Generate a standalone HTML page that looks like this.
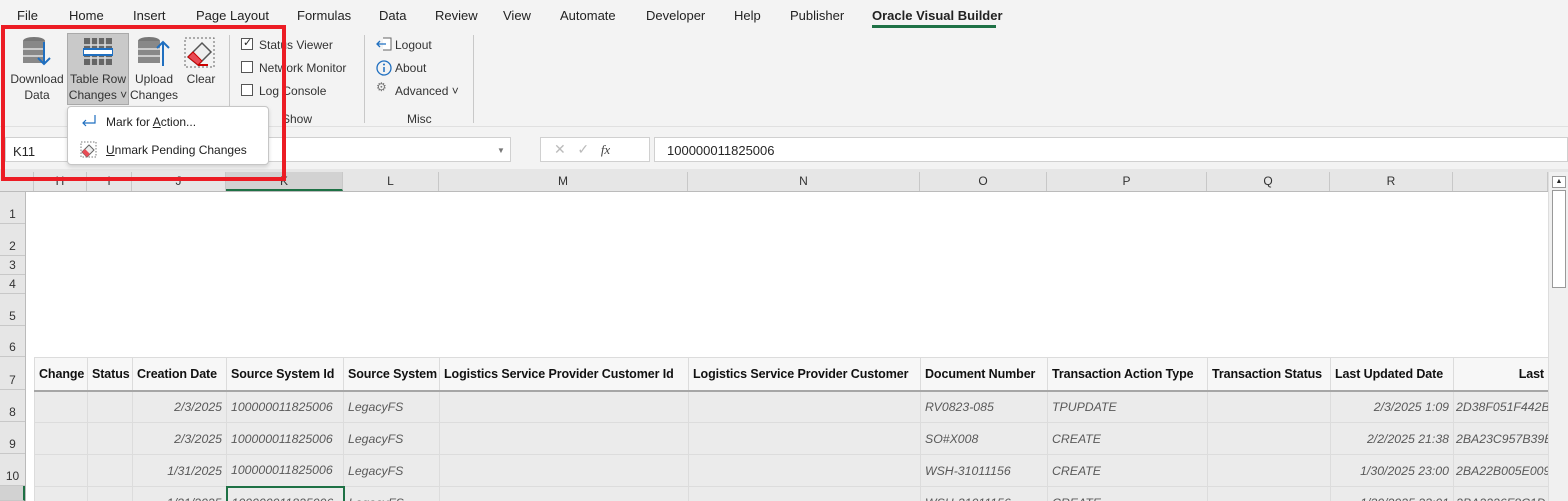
<!DOCTYPE html>
<html style="overflow:hidden;height:501px"><head><meta charset="utf-8"><style>
*{box-sizing:border-box;margin:0;padding:0}
body{width:1568px;height:501px;overflow:hidden;background:#f3f3f3;font-family:"Liberation Sans",sans-serif;position:relative;color:#262626}
.a{position:absolute}
.tab{position:absolute;top:8px;font-size:13px;color:#222}
.lbl{font-size:12px;color:#333;text-align:center;line-height:16px}
.sm{font-size:12px;color:#333}
.cb{position:absolute;width:12px;height:12px;border:1px solid #555;background:#fff}
table{border-collapse:collapse;table-layout:fixed;position:absolute;left:34px;top:357px;width:1514px}
td{height:32px;font-size:12.3px;padding:0 4px;white-space:nowrap;overflow:hidden;border:1px solid #dcdcdc;background:#ebebeb;color:#595959;font-style:italic;vertical-align:middle}
tr.h td{background:#f7f7f7;font-weight:bold;font-style:normal;color:#111;height:33px;border-bottom:2px solid #a6a6a6;font-size:12.5px;letter-spacing:-0.1px;padding:0 4px}
.r{text-align:right}
.ch{position:absolute;top:172px;height:19px;font-size:12px;text-align:center;line-height:19px;color:#333;border-right:1px solid #c8c8c8;background:#e6e6e6}
.rh{position:absolute;left:0;width:25px;font-size:12px;text-align:center;color:#333;border-bottom:1px solid #c8c8c8;background:#e6e6e6;display:flex;align-items:flex-end;justify-content:center;padding-bottom:2px}
</style></head><body>
<div class="tab" style="left:17px">File</div>
<div class="tab" style="left:69px">Home</div>
<div class="tab" style="left:133px">Insert</div>
<div class="tab" style="left:196px">Page Layout</div>
<div class="tab" style="left:297px">Formulas</div>
<div class="tab" style="left:379px">Data</div>
<div class="tab" style="left:435px">Review</div>
<div class="tab" style="left:503px">View</div>
<div class="tab" style="left:560px">Automate</div>
<div class="tab" style="left:646px">Developer</div>
<div class="tab" style="left:734px">Help</div>
<div class="tab" style="left:790px">Publisher</div>
<div class="tab" style="left:872px;font-weight:bold;color:#222">Oracle Visual Builder</div>
<div class="a" style="left:872px;top:25px;width:124px;height:3px;background:#1e7145"></div>
<div class="a" style="left:0;top:30px;width:1568px;height:97px;background:#f3f3f3;border-bottom:1px solid #e0e0e0"></div>

<svg class="a" style="left:20px;top:36px" width="34" height="32"><ellipse cx="14" cy="5" rx="11" ry="4" fill="#777"/><rect x="3" y="5" width="22" height="22" fill="#888"/><rect x="3" y="12" width="22" height="2" fill="#ccc"/><rect x="3" y="19" width="22" height="2" fill="#ccc"/><path d="M24 6v22M18 22l6 6 6-6" stroke="#1f6fc0" stroke-width="2" fill="none"/></svg>
<div class="a lbl" style="left:8px;top:71px;width:58px">Download<br>Data</div>
<div class="a" style="left:67px;top:33px;width:62px;height:72px;background:#c9c9c9;border:1px solid #aaa"></div>
<svg class="a" style="left:83px;top:37px" width="30" height="30"><rect x="1" y="1" width="28" height="27" fill="#666"/><g stroke="#ddd" stroke-width="1.5"><path d="M1 8h28M1 21h28M8 1v27M15 1v27M22 1v27"/></g><rect x="0" y="12" width="30" height="6" fill="#fff" stroke="#1f6fc0" stroke-width="2"/></svg>
<div class="a lbl" style="left:68px;top:71px;width:60px">Table Row<br>Changes ˅</div>
<svg class="a" style="left:137px;top:36px" width="34" height="32"><ellipse cx="12" cy="5" rx="11" ry="4" fill="#777"/><rect x="1" y="5" width="22" height="22" fill="#888"/><rect x="1" y="12" width="22" height="2" fill="#ccc"/><rect x="1" y="19" width="22" height="2" fill="#ccc"/><path d="M26 30V6M20 12l6-6 6 6" stroke="#1f6fc0" stroke-width="2" fill="none"/></svg>
<div class="a lbl" style="left:130px;top:71px;width:48px">Upload<br>Changes</div>
<svg class="a" style="left:184px;top:37px" width="32" height="32"><rect x="1" y="1" width="29" height="29" fill="none" stroke="#666" stroke-dasharray="2 2"/><path d="M4 20L18 6l9 9-13 13z" fill="#eee" stroke="#555" stroke-width="1.5"/><path d="M4 20l5-5 9 9-4 4z" fill="#e84b55" stroke="#c00" stroke-width="1"/><path d="M14 28h10" stroke="#c00" stroke-width="2"/></svg>
<div class="a lbl" style="left:184px;top:71px;width:34px">Clear</div>
<div class="a" style="left:229px;top:35px;width:1px;height:88px;background:#c8c8c8"></div>
<div class="cb" style="left:241px;top:38px"></div><div class="a" style="left:243px;top:36px;font-size:11px">✓</div>
<div class="a sm" style="left:259px;top:38px">Status Viewer</div>
<div class="cb" style="left:241px;top:61px"></div><div class="a sm" style="left:259px;top:61px">Network Monitor</div>
<div class="cb" style="left:241px;top:84px"></div><div class="a sm" style="left:259px;top:84px">Log Console</div>
<div class="a sm" style="left:282px;top:112px">Show</div>
<div class="a" style="left:364px;top:35px;width:1px;height:88px;background:#c8c8c8"></div>
<svg class="a" style="left:375px;top:36px" width="18" height="16"><path d="M8 2h8v12H8" fill="#fff" stroke="#666"/><path d="M11 8H2M5 5L2 8l3 3" stroke="#1f6fc0" fill="none" stroke-width="1.3"/></svg>
<div class="a sm" style="left:395px;top:38px">Logout</div>
<svg class="a" style="left:376px;top:60px" width="16" height="16"><circle cx="8" cy="8" r="7" fill="none" stroke="#1f6fc0" stroke-width="1.3"/><path d="M8 7v5" stroke="#1f6fc0" stroke-width="1.5"/><circle cx="8" cy="4.5" r="1" fill="#1f6fc0"/></svg>
<div class="a sm" style="left:395px;top:61px">About</div>
<div class="a" style="left:376px;top:80px;font-size:12px;color:#777">⚙</div>
<div class="a sm" style="left:395px;top:84px">Advanced ˅</div>
<div class="a sm" style="left:407px;top:112px">Misc</div>
<div class="a" style="left:473px;top:35px;width:1px;height:88px;background:#c8c8c8"></div>

<div class="a" style="left:5px;top:137px;width:506px;height:25px;background:#fff;border:1px solid #d0d0d0;font-size:13px;padding:6px 7px">K11</div>
<div class="a" style="left:497px;top:146px;font-size:8px;color:#777">▼</div>
<div class="a" style="left:540px;top:137px;width:110px;height:25px;background:#fff;border:1px solid #d0d0d0;color:#bbb;font-size:14px;padding:3px 13px">✕ &nbsp;&nbsp;✓ &nbsp;&nbsp;<i style="color:#444;font-family:'Liberation Serif';font-size:13px">fx</i></div>
<div class="a" style="left:654px;top:137px;width:914px;height:25px;background:#fff;border:1px solid #d0d0d0;font-size:13px;padding:5px 12px">100000011825006</div>

<div class="a" style="left:0;top:169px;width:1568px;height:23px;background:#e6e6e6;border-bottom:1px solid #bbb"></div>
<div class="ch" style="left:25px;width:9px"></div>
<div class="ch" style="left:34px;width:53px">H</div><div class="ch" style="left:87px;width:45px">I</div><div class="ch" style="left:132px;width:94px">J</div>
<div class="ch" style="left:226px;width:117px;background:#d2d2d2;border-bottom:2px solid #1e7145">K</div>
<div class="ch" style="left:343px;width:96px">L</div><div class="ch" style="left:439px;width:249px">M</div><div class="ch" style="left:688px;width:232px">N</div><div class="ch" style="left:920px;width:127px">O</div><div class="ch" style="left:1047px;width:160px">P</div><div class="ch" style="left:1207px;width:123px">Q</div><div class="ch" style="left:1330px;width:123px">R</div><div class="ch" style="left:1453px;width:95px"></div>
<div class="a" style="left:25px;top:192px;width:1523px;height:309px;background:#fff;border-left:1px solid #bbb"></div>
<div class="rh" style="top:192px;height:32px">1</div>
<div class="rh" style="top:224px;height:32px">2</div>
<div class="rh" style="top:256px;height:19px">3</div>
<div class="rh" style="top:275px;height:19px">4</div>
<div class="rh" style="top:294px;height:32px">5</div>
<div class="rh" style="top:326px;height:31px">6</div>
<div class="rh" style="top:357px;height:33px">7</div>
<div class="rh" style="top:390px;height:32px">8</div>
<div class="rh" style="top:422px;height:32px">9</div>
<div class="rh" style="top:454px;height:32px">10</div>
<div class="rh" style="top:486px;height:15px;background:#d2d2d2;border-right:2px solid #1e7145"></div>

<table>
<colgroup><col style="width:53px"><col style="width:45px"><col style="width:94px"><col style="width:117px"><col style="width:96px"><col style="width:249px"><col style="width:232px"><col style="width:127px"><col style="width:160px"><col style="width:123px"><col style="width:123px"><col style="width:95px"></colgroup>
<tr class="h"><td>Change</td><td>Status</td><td>Creation Date</td><td>Source System Id</td><td>Source System</td><td>Logistics Service Provider Customer Id</td><td>Logistics Service Provider Customer</td><td>Document Number</td><td>Transaction Action Type</td><td>Transaction Status</td><td>Last Updated Date</td><td class="r">Last</td></tr>
<tr><td></td><td></td><td class="r">2/3/2025</td><td>100000011825006</td><td>LegacyFS</td><td></td><td></td><td>RV0823-085</td><td>TPUPDATE</td><td></td><td class="r">2/3/2025 1:09</td><td style="padding:0 2px">2D38F051F442B</td></tr>
<tr><td></td><td></td><td class="r">2/3/2025</td><td>100000011825006</td><td>LegacyFS</td><td></td><td></td><td>SO#X008</td><td>CREATE</td><td></td><td class="r">2/2/2025 21:38</td><td style="padding:0 2px">2BA23C957B39B</td></tr>
<tr><td></td><td></td><td class="r">1/31/2025</td><td>100000011825006</td><td>LegacyFS</td><td></td><td></td><td>WSH-31011156</td><td>CREATE</td><td></td><td class="r">1/30/2025 23:00</td><td style="padding:0 2px">2BA22B005E009</td></tr>
<tr><td></td><td></td><td class="r">1/31/2025</td><td style="border:2px solid #1e7145">100000011825006</td><td>LegacyFS</td><td></td><td></td><td>WSH-31011156</td><td>CREATE</td><td></td><td class="r">1/30/2025 23:01</td><td style="padding:0 2px">2BA2226F8C1D</td></tr>
</table>

<div class="a" style="left:1548px;top:172px;width:20px;height:329px;background:#f0f0f0;border-left:1px solid #ddd"></div>
<div class="a" style="left:1552px;top:176px;width:14px;height:12px;background:#fff;border:1px solid #999;font-size:7px;text-align:center;line-height:10px">▲</div>
<div class="a" style="left:1552px;top:190px;width:14px;height:98px;background:#fff;border:1px solid #999"></div>

<div class="a" style="left:67px;top:106px;width:202px;height:59px;background:#fff;border:1px solid #c6c6c6;border-radius:4px;box-shadow:0 2px 4px rgba(0,0,0,.15)"></div>
<svg class="a" style="left:81px;top:114px" width="16" height="14"><path d="M14 1v8H2M5 6L2 9l3 3" stroke="#1f6fc0" fill="none" stroke-width="1.2"/></svg>
<div class="a" style="left:106px;top:115px;font-size:12px;color:#222">Mark for <u>A</u>ction...</div>
<svg class="a" style="left:80px;top:141px" width="17" height="17"><rect x="1" y="1" width="15" height="15" fill="none" stroke="#777" stroke-dasharray="1.5 1.5"/><path d="M2 11l7-7 5 5-7 7z" fill="#eee" stroke="#666"/><path d="M2 11l3-3 5 5-3 3z" fill="#e84b55"/></svg>
<div class="a" style="left:106px;top:143px;font-size:12px;color:#222"><u>U</u>nmark Pending Changes</div>

<div class="a" style="left:1px;top:25px;width:285px;height:156px;border:4px solid #ec1c24"></div>
</body></html>
